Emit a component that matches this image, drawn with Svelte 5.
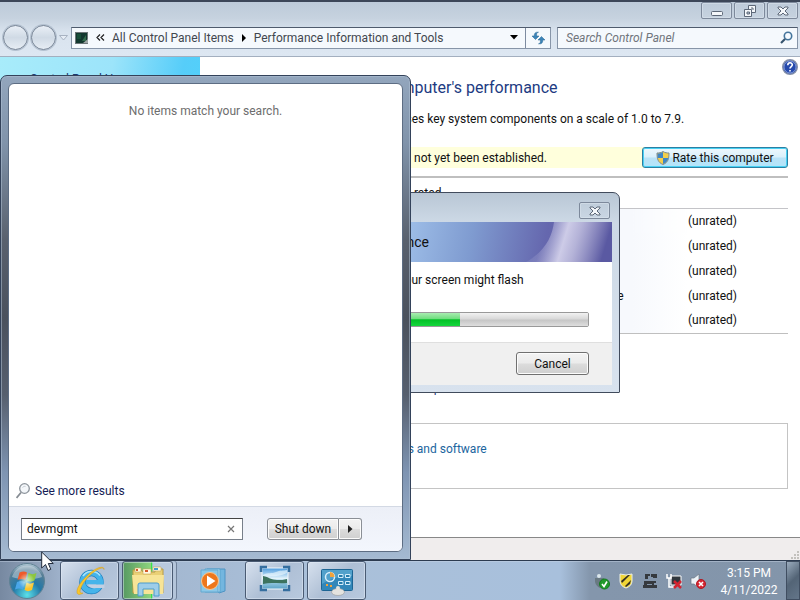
<script>
  const scores = ['', '', '', 'rate', ''];
</script>

{#snippet cross()}
  <svg width="12" height="10" viewBox="0 0 12 10" aria-hidden="true">
    <path d="M1 1h3l2 2 2-2h3v1L8 5l3 3v1H8L6 7 4 9H1V8l3-3-3-3z" fill="#f4f7fa" stroke="#5d6878" />
  </svg>
{/snippet}

<div class="desktop">
  <section class="window" aria-label="Performance Information and Tools">
    <header>
      <div class="caption">
        <button aria-label="Minimize">
          <svg width="14" height="12" viewBox="0 0 14 12"><rect x="1.500" y="6.500" width="11" height="4" rx="1" fill="#f4f7fa" stroke="#5d6878" /></svg>
        </button>
        <button aria-label="Restore">
          <svg width="14" height="12" viewBox="0 0 14 12"><path d="M5.500.5h7v7h-7zM8 3h2v2" fill="#f4f7fa" stroke="#5d6878" /><path d="M1.500 4.500h7v7h-7z" fill="#f4f7fa" stroke="#5d6878" /><path d="M4 7h2.500v2H4z" fill="#b9c6d6" stroke="#5d6878" /></svg>
        </button>
        <button aria-label="Close">{@render cross()}</button>
      </div>
      <nav>
        <div class="travel">
          <button aria-label="Back"></button>
          <button aria-label="Forward"></button>
          <svg width="9" height="6" viewBox="0 0 9 6"><path d="M.5.5h8L4.500 5z" fill="#e6edf5" stroke="#a8b3c2" /></svg>
        </div>
        <div class="address">
          <svg width="14" height="12" viewBox="0 0 14 12"><rect x=".5" y=".5" width="12" height="11" fill="#12382f" stroke="#6d7678" /><path d="M2 2h4v5H2z" fill="#184e39" /><path d="m7 9 4-6v6z" fill="#336b4d" /><path d="M8 11h5V7z" fill="#9ea5a5" /></svg>
          <svg width="9" height="7" viewBox="0 0 9 7"><path d="m4 .5-3 3 3 3M8 .5l-3 3 3 3" fill="none" stroke="#222" stroke-width="1.200" /></svg>
          <a href="#all">All Control Panel Items</a>
          <svg width="6" height="8" viewBox="0 0 6 8"><path d="M1 0v8l4-4z" fill="#000" /></svg>
          <a href="#performance">Performance Information and Tools</a>
          <svg class="drop" width="8" height="5" viewBox="0 0 8 5"><path d="M0 0h8L4 4.500z" fill="#000" /></svg>
          <button aria-label="Refresh">
            <svg width="15" height="14" viewBox="0 0 15 14"><path d="M7.500 1.200C5.500 1.500 5.600 3 5.600 5H8L4.500 8.500 1 5h2.200C3.200 2 4.500.8 7.500 1.200zM7.500 12.800c2-.3 1.900-1.800 1.900-3.800H7l3.500-3.500L14 9h-2.200c0 3-1.300 4.200-4.300 3.800z" fill="#3c84b8" stroke="#276490" stroke-width=".5" /></svg>
          </button>
        </div>
        <label class="search">
          <input type="search" placeholder="Search Control Panel" aria-label="Search Control Panel" />
          <svg width="13" height="13" viewBox="0 0 13 13"><circle cx="8" cy="5" r="3.700" fill="#f5faff" stroke="#44759c" stroke-width="1.600" /><path d="m5 8-4 4" stroke="#35536d" stroke-width="2.200" /></svg>
        </label>
      </nav>
    </header>

    <div class="body">
      <aside><a href="#home">Control Panel Home</a></aside>
      <main>
        <svg class="help" width="16" height="16" viewBox="0 0 16 16"><circle cx="8" cy="8" r="7.300" fill="#2549ac" stroke="#8590a8" stroke-width="1.400" /><circle cx="8" cy="8" r="6" fill="none" stroke="#a6b9ea" stroke-width=".7" /><path d="M5.800 6.200c0-3.200 4.500-3 4.500-.4C10.300 7.500 8 7.600 8 9.500M8 11v1.600" fill="none" stroke="#fff" stroke-width="1.600" /></svg>
        <h1>computer's performance</h1>
        <p class="intro">assesses key system components on a scale of 1.0 to 7.9.</p>
        <div class="notice">
          <span>not yet been established.</span>
          <button class="rate">
            <svg width="14" height="14" viewBox="0 0 14 14"><path d="M7 .5C5 1.800 3 2 1 2c0 6 1 9.500 6 11.500C12 11.500 13 8 13 2c-2 0-4-.2-6-1.500z" fill="#f3cf4b" stroke="#7d8a93" /><path d="M7 1C5 2.200 3.500 2.500 1.500 2.500L1.700 7H7zM7 7h5.300C11.700 10 10 12 7 13z" fill="#3f86c6" /></svg>
            Rate this computer
          </button>
        </div>
        <table>
          <thead><tr><th>rated</th><th></th></tr></thead>
          <tbody>
            {#each scores as name}
              <tr><td>{name}</td><td>(unrated)</td></tr>
            {/each}
          </tbody>
        </table>
        <p class="update">computer</p>
        <div class="links"><a href="#software">scores and software</a></div>
      </main>
    </div>
    <footer>
      <svg width="10" height="10" viewBox="0 0 10 10"><path d="M7 1h2v2H7zM4 4h2v2H4zM7 4h2v2H7zM1 7h2v2H1zM4 7h2v2H4zM7 7h2v2H7z" fill="#c3c1bd" /></svg>
    </footer>
  </section>

  <section class="dialog" aria-label="Assessment">
    <div class="dialog-caption"><button aria-label="Close">{@render cross()}</button></div>
    <div class="banner">
      <span>Performance</span>
      <svg width="110" height="40" viewBox="0 0 110 40" aria-hidden="true">
        <defs>
          <linearGradient id="beam" gradientTransform="rotate(8)"><stop offset="0" stop-color="#c9c8e6" stop-opacity="0" /><stop offset=".25" stop-color="#c9c8e6" stop-opacity=".2" /><stop offset=".5" stop-color="#d9d7ee" stop-opacity=".9" /><stop offset=".65" stop-color="#c3c1e0" stop-opacity=".85" /><stop offset="1" stop-color="#5a59a2" /></linearGradient>
        </defs>
        <path d="M24 40C42 30 50 16 52 0h58v40z" fill="url(#beam)" />
      </svg>
    </div>
    <div class="progress">
      <p>your screen might flash</p>
      <progress value="32" max="100" aria-label="Assessment progress"></progress>
    </div>
    <div class="actions"><button>Cancel</button></div>
  </section>

  <section class="start" aria-label="Start menu">
    <div class="pane">
      <p class="empty">No items match your search.</p>
      <a class="more" href="#more">
        <svg width="14" height="16" viewBox="0 0 14 16"><circle cx="8.500" cy="5.500" r="4.800" fill="#f4f7fa" stroke="#8d949c" stroke-width="1.300" /><path d="M6.500 4.500c.8-1 2-1.300 3-1" fill="none" stroke="#c6ccd3" /><path d="m5 9.500-4.500 5.500" stroke="#858b92" stroke-width="1.800" /></svg>
        See more results
      </a>
      <div class="run">
        <label class="query">
          <input value="devmgmt" aria-label="Search programs and files" />
          <button aria-label="Clear"><svg width="8" height="8" viewBox="0 0 8 8"><path d="m1 1 6 6M7 1 1 7" stroke="#777" stroke-width="1.200" /></svg></button>
        </label>
        <div class="power">
          <button>Shut down</button>
          <button aria-label="More options"><svg width="5" height="8" viewBox="0 0 5 8"><path d="M0 0v8l4.500-4z" fill="#222" /></svg></button>
        </div>
      </div>
    </div>
  </section>

  <div class="taskbar">
    <button class="orb" aria-label="Start">
      <svg width="38" height="38" viewBox="0 0 38 38">
        <defs>
          <radialGradient id="orb" cx=".5" cy=".9" r=".9"><stop offset="0" stop-color="#5be0e8" /><stop offset=".45" stop-color="#2379a8" /><stop offset=".8" stop-color="#557d96" /><stop offset="1" stop-color="#b9cfdb" /></radialGradient>
          <radialGradient id="glow"><stop offset="0" stop-color="#e9fff0" stop-opacity=".8" /><stop offset="1" stop-color="#e9fff0" stop-opacity="0" /></radialGradient>
        </defs>
        <circle cx="19" cy="19" r="17.500" fill="url(#orb)" stroke="#5f8294" />
        <path d="M4 15a15.500 15.500 0 0 1 30 0c-8 3-22 3-30 0z" fill="#fff" opacity=".35" />
        <path d="M11.500 10.500c3-1.500 5-1.500 7.500 0L17.500 18c-2.500-1.500-5-1.500-8 0z" fill="#ee5a2b" />
        <path d="M20.500 11c3 1.500 5 1.500 8 0l-2 7.500c-3 1.500-5 1.500-7.500 0z" fill="#8cc63f" />
        <path d="M9 20c3-1.500 5-1.500 8 0l-2 7.500c-3-1.500-5-1.500-8 0z" fill="#4aa6e8" />
        <path d="M18.500 20.500c2.500 1.500 4.500 1.500 7.500 0l-2 7.500c-3 1.500-5 1.500-7.500 0z" fill="#fdc52b" />
        <circle cx="18.500" cy="19" r="8" fill="url(#glow)" />
      </svg>
    </button>
    <button class="task" aria-label="Internet Explorer">
      <svg width="34" height="34" viewBox="0 0 34 34"><circle cx="18.500" cy="18" r="9" fill="none" stroke="#1c7dbd" stroke-width="6.500" /><circle cx="18.500" cy="18" r="9" fill="none" stroke="#45b4ea" stroke-width="5.200" /><path d="M13 16h17.500v4.500H13z" fill="#45b4ea" /><path d="M15 20.500h16.500V24H23q-6 1-8-3.500z" fill="#c2d0e2" /><path d="M10 12c4-6 13-6 17-.5" fill="none" stroke="#a9e2fb" stroke-width="1.600" /><path d="M31 5.500c.5-4-7-2.500-14 3.500S3 24 4 28.500c.5 3 4 2 6 .5-3 .5-3.500-1-2.500-4C10 17 20 7 27 4.500c2.500-.7 3.500-.5 4 1z" fill="#f7c62f" stroke="#d49b17" stroke-width=".5" /></svg>
    </button>
    <button class="task files" aria-label="Windows Explorer">
      <svg width="34" height="34" viewBox="0 0 34 34"><path d="M2 6h8l2 2h12V5h8v24H2z" fill="#e9cf75" stroke="#b89a42" /><path d="M4 4h6v4H4zM12 5h8v5h-8zM22 3h8v4h-8z" fill="#fff8df" stroke="#c6a95a" stroke-width=".6" /><path d="M5 5h2v2H5zM14 6h3v2h-3z" fill="#d55a2c" /><path d="M23 4h4v2h-4z" fill="#409ad0" /><path d="M1 11h32l-1 19H3z" fill="#f7e497" /><path d="M7 32V21q0-2 2-2h17q2 0 2 2v11h-5v-7H12v7z" fill="#9dcdea" stroke="#4d9ccb" /></svg>
    </button>
    <button class="task plain" aria-label="Media Player">
      <svg width="28" height="28" viewBox="0 0 28 28"><path d="M8 2h18v22l-6 2z" fill="#73b6df" stroke="#4f94c4" /><path d="M6 2h15v23H6z" fill="#b2dcf1" stroke="#5ba4ce" /><path d="M2 3h17v22H2z" fill="#8bc8e8" stroke="#65a9d0" /><circle cx="11" cy="14" r="8.500" fill="#ed771c" stroke="#fbc78f" /><path d="M8 8.500v11l8.500-5.500z" fill="#fff" /></svg>
    </button>
    <button class="task" aria-label="Display settings">
      <svg class="raised" width="32" height="28" viewBox="0 0 32 28"><defs><linearGradient id="sky" x2="0" y2="1"><stop offset="0" stop-color="#4a9ade" /><stop offset=".5" stop-color="#e3f3fb" /><stop offset=".6" stop-color="#a4d2e6" /><stop offset="1" stop-color="#5aa2c6" /></linearGradient></defs><rect x="3" y="3" width="26" height="21" fill="url(#sky)" stroke="#f1f7fb" /><path d="M4 10c5-3 9-1 13-3s7-1 11-2v3c-8 4-16 3-24 4z" fill="#f4fbff" opacity=".6" /><path d="M4 11c6 1 8 4 14 4 4 0 7 0 10-1v4c-8 1-16-1-24 1z" fill="#3c735f" /><path d="M2 7V2h6M24 2h6v5M2 20v5h6M30 20v5h-6" fill="none" stroke="#356e9f" stroke-width="2.500" /></svg>
    </button>
    <button class="task" aria-label="Control Panel">
      <svg width="34" height="30" viewBox="0 0 34 30"><rect x="1.500" y="3.500" width="31" height="21" rx="1" fill="#3287b9" stroke="#1d6594" /><path d="M2 4h30v6Q16 9 2 18z" fill="#72bbdd" opacity=".5" /><circle cx="10" cy="11" r="4.500" fill="none" stroke="#d9effa" stroke-width="1.500" /><path d="M10 11V6a5 5 0 0 1 4.500 5z" fill="#f3a33a" /><path d="M18.500 8.500h4.500v3h-4.500zM25.500 8.500H30v3h-4.500zM18.500 15.500h4.500v3h-4.500zM25.500 15.500H30v3h-4.500z" fill="#277cab" stroke="#d4eefb" /><path d="M6 18h2v2H6zM10 19h2v2h-2z" fill="#f3a33a" /><ellipse cx="18" cy="26" rx="6.500" ry="3.500" fill="#e4e3df" stroke="#999b9b" stroke-width=".6" /><circle cx="18" cy="22" r="2" fill="#e4e3df" /></svg>
    </button>

    <div class="tray">
      <svg width="18" height="18" viewBox="0 0 18 18"><circle cx="6" cy="4" r="2" fill="#dce7ec" /><path d="M2 6h9v4q0 4-4 6-4-2-5-6z" fill="#697982" /><circle cx="11.500" cy="12" r="5" fill="#219a2b" stroke="#157a20" /><path d="m9 12 2 2.500 3-5" fill="none" stroke="#fff" stroke-width="1.600" /></svg>
      <svg width="18" height="18" viewBox="0 0 18 18"><path d="M3 2q6 2 12 0v7q0 5-6 7-6-2-6-7z" fill="#f0d535" stroke="#edf0e5" /><path d="m4 9 7-6h2L5 11zM8 14l6-6-1 4-4 3z" fill="#332f22" /></svg>
      <svg width="18" height="18" viewBox="0 0 18 18"><path d="M4 2h5v2H7v3H4zM10 2h6v4h-4V5h-2zM3 9h12v2h-2v2h3v3H2v-3h1z" fill="#35393e" /><path d="M6 12h5v1H6z" fill="#8395aa" /></svg>
      <svg width="18" height="18" viewBox="0 0 18 18"><path d="M6 4h10v9H6z" fill="#30373e" stroke="#fff" /><path d="M2 2v4h4V2M4 6v9h6" fill="none" stroke="#fff" stroke-width="1.500" /><path d="m9 9 7 7M16 9l-7 7" stroke="#d22431" stroke-width="2.500" /></svg>
      <svg width="18" height="18" viewBox="0 0 18 18"><path d="M2 6h3l5-4v14l-5-4H2z" fill="#edf2f7" stroke="#6b7785" stroke-width=".7" /><circle cx="12" cy="12" r="4.500" fill="#d72632" stroke="#ae1923" /><path d="m10 10 4 4m0-4-4 4" stroke="#fff" stroke-width="1.600" /></svg>
    </div>
    <time><span>3:15 PM</span><span>4/11/2022</span></time>
    <button class="peek" aria-label="Show desktop"></button>
  </div>

  <svg class="cursor" width="13" height="21" viewBox="0 0 13 21" aria-hidden="true"><path d="M.7 1v16l3.800-3.500L7 19.500l2.800-1.200-2.500-5.800h5z" fill="#fff" stroke="#222c3c" /></svg>
</div>

<style>
  .desktop { position: relative; display: flex; flex-direction: column; height: 100vh; overflow: hidden; font: 12px/16px Roboto, "Open Sans", sans-serif; color: #111; }
  .desktop * { box-sizing: border-box; }
  button, input { font: inherit; color: inherit; margin: 0; padding: 0; border: 0; background: none; outline: none; }
  button { display: flex; align-items: center; justify-content: center; }
  a { color: inherit; text-decoration: none; }
  p, h1 { margin: 0; font-weight: 400; }
  svg { flex: none; }

  .window { flex: 1; display: flex; flex-direction: column; min-height: 0; }
  header { background: linear-gradient(#bdcad9 0, #c6d2df 16px, #d9e3ee 30px, #dde7f2 100%); border-top: 2px solid #3c4658; border-bottom: 1px solid #a3afbf; }
  .caption { display: flex; justify-content: flex-end; gap: 2px; padding-right: 2px; }
  .caption button, .dialog-caption button { width: 31px; height: 17px; border: 1px solid #7d899b; border-radius: 2px; box-shadow: inset 0 0 0 1px #dce5ef88; }
  nav { display: flex; align-items: center; height: 37px; gap: 6px; padding: 0 2px 0 3px; }
  .travel { display: flex; align-items: center; gap: 3px; margin-right: -3px; }
  .travel button { width: 25px; height: 25px; border: 1px solid #768394; border-radius: 50%; background: linear-gradient(#e9eff6, #d0dae5 50%, #e6edf4); box-shadow: 0 0 0 1px #b4c1d0; }
  .address, .search { display: flex; align-items: center; height: 22px; border: 1px solid #8795a8; border-top-color: #4f5b6d; background: #f5f9fd; color: #42474f; }
  .address { flex: 1; gap: 7px; padding-left: 3px; }
  .drop { margin-left: auto; }
  .address button { width: 25px; height: 20px; border-left: 1px solid #7d8ba0; }
  .search { width: 241px; padding: 0 4px 0 8px; }
  .search input { flex: 1; min-width: 0; appearance: none; }
  .search input::placeholder { color: #70757c; font-style: italic; }

  .body { flex: 1; display: flex; min-height: 0; background: #fff; }
  aside { width: 200px; padding: 14px 30px; background: linear-gradient(100deg, #a8ecfa 0, #9ce4fa 40%, #56cdf9 65%, #4fd2fb 80%, #7ce0fc 90%, #43cdf9 100%); color: #1a3a70; }
  main { flex: 1; position: relative; padding: 20px 12px 0 210px; }
  .help { position: absolute; top: 2px; right: 2px; }
  h1 { margin-left: -27px; font-size: 16px; line-height: 22px; color: #1d3b82; }
  .intro { margin: 12px 0 20px -36px; }
  .notice { display: flex; align-items: center; justify-content: space-between; height: 21px; padding-left: 4px; background: linear-gradient(90deg, #ffffdc 60%, #fffff4); }
  .rate { width: 146px; height: 21px; gap: 2px; border: 1px solid #2c7fa3; border-radius: 3px; background: linear-gradient(#eef8fd, #d9f0fb 48%, #b9e2f7 52%, #b3e5fa); box-shadow: inset 0 0 0 1px #48d1f3; }
  table { width: 100%; margin-top: 8px; border-collapse: collapse; border-top: 2px solid #bfbfbf; border-bottom: 1px solid #bfbfbf; }
  th { height: 31px; padding: 0 4px; text-align: left; font-weight: 400; }
  thead { border-bottom: 1px solid #c4c4c8; }
  tbody tr { height: 25px; }
  td { padding: 0; }
  td:first-child { padding-left: 193px; background: linear-gradient(90deg, #f7f9fd 80%, #fff); }
  td:last-child { width: 100px; }
  .update { margin: 46px 0 27px; color: #1d3b82; }
  .links { height: 66px; margin-left: -40px; padding: 17px 0 0 7px; border: 1px solid #c4c4c4; color: #1c659e; }
  footer { display: flex; align-items: flex-end; justify-content: flex-end; height: 23px; border-top: 1px solid #888; background: #f0eded; }

  .dialog { position: absolute; left: 220px; top: 192px; width: 400px; height: 201px; display: flex; flex-direction: column; padding: 0 7px 7px; border: 1px solid #414b5c; border-radius: 7px 7px 1px 1px; background: linear-gradient(#b9c7d5, #cdd9e6 30px, #d8e2ee); }
  .dialog-caption { display: flex; justify-content: flex-end; height: 29px; padding: 9px 2px 0; }
  .banner { display: flex; justify-content: space-between; height: 40px; padding-left: 120px; font-size: 14px; line-height: 40px; background: linear-gradient(100deg, #a8caf0 40%, #7f9bd0 63%, #6567ae 82%, #605fa6 100%); }
  .progress { height: 80px; padding: 10px 23px 0 171px; background: #fff; }
  progress { display: block; width: 100%; height: 15px; margin-top: 24px; border: 1px solid #999; border-radius: 2px; appearance: none; overflow: hidden; }
  progress::-webkit-progress-bar { background: linear-gradient(#f2f2f2, #d9d9d9 45%, #c6c6c6 55%, #dedede); }
  progress::-webkit-progress-value { background: linear-gradient(#a8ecb0, #6fdd7e 45%, #02c026 52%, #14d63c); }
  .actions { flex: 1; display: flex; justify-content: flex-end; padding: 9px 23px; border-top: 1px solid #dfdfdf; background: #f0f0f0; }
  .actions button, .power button { border: 1px solid #707070; border-radius: 3px; background: linear-gradient(#f3f3f3, #ebebeb 48%, #dcdcdc 52%, #cfcfcf); box-shadow: inset 0 0 0 1px #fcfcfc; }
  .actions button { width: 73px; height: 23px; }

  .start { position: absolute; left: 0; bottom: 40px; width: 411px; height: 485px; padding: 7px; border: 1px solid #33425a; border-radius: 7px 7px 0 0; background: linear-gradient(#93a6bd, #8093aa 14%, #59616e 34%, #4a515d 50%, #565f6e 66%, #7e94b2 82%, #a5bad2); box-shadow: inset 0 0 0 1px #b1c1d388; }
  .pane { display: flex; flex-direction: column; height: 100%; border: 1px solid #5d6d83; border-radius: 6px; background: #fff; overflow: hidden; }
  .empty { padding-top: 19px; text-align: center; color: #6d6d6d; }
  .more { display: flex; align-items: center; gap: 5px; margin-top: auto; padding: 0 7px 7px; color: #151c55; }
  .run { display: flex; align-items: center; gap: 24px; height: 45px; padding: 0 12px; border-top: 1px solid #d3d9e4; background: linear-gradient(#eceff7, #f3f6fd); }
  .query { display: flex; align-items: center; width: 222px; height: 22px; padding: 0 7px 0 5px; border: 1px solid #777f8a; border-top-color: #444; background: #fff; }
  .query input { flex: 1; min-width: 0; }
  .power { display: flex; }
  .power button { height: 22px; width: 72px; border-color: #8b8f96; border-radius: 3px 0 0 3px; }
  .power button:last-child { width: 23px; border-left: 0; border-radius: 0 3px 3px 0; }

  .taskbar { display: flex; align-items: stretch; height: 40px; border-top: 1px solid #2c3b50; background: linear-gradient(90deg, #7789a1 0, #9eb1ca 60px, #aac0d9 300px, #a8c0dc 560px, #8496ac 590px, #8395aa 100%); box-shadow: inset 0 1px #c7d5e577; }
  .orb { width: 54px; margin-right: 6px; }
  .task { width: 59px; margin-right: 3px; border: 1px solid #4a5b73; border-radius: 3px; background: linear-gradient(135deg, #d7e1ee, #aebfd5 50%, #b8c9de); box-shadow: inset 0 0 0 1px #e6eef877; }
  .files { width: 51px; background: linear-gradient(90deg, #579a62, #8ed47e 57%, #31e341 58%, #b8c9de 61%); margin-right: 10px; box-shadow: inset 0 0 0 1px #e6eef877, 3px 0 #b4c5da, 4px 0 #6f819a; }
  .plain { border-color: transparent; background: none; box-shadow: none; }
  .raised { margin-bottom: 3px; }
  .tray { display: flex; align-items: center; gap: 6px; margin-left: auto; }
  time { display: flex; flex-direction: column; align-items: center; justify-content: center; width: 74px; margin-left: 5px; padding-top: 2px; color: #fff; line-height: 17px; }
  .peek { width: 14px; border: 1px solid #404e61; background: linear-gradient(135deg, #9aabbd, #536476 50%, #64768a); }
  .cursor { position: absolute; left: 41px; bottom: 28px; }
</style>
